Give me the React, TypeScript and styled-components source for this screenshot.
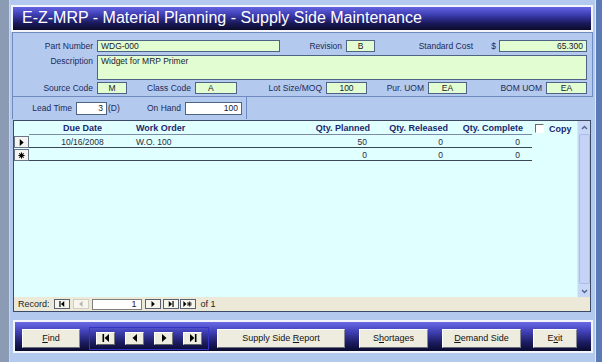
import React from 'react';
import styled, { createGlobalStyle } from 'styled-components';

const GlobalStyle = createGlobalStyle`
    html, body {
        margin: 0;
        padding: 0;
        background: #5b7bb6;
    }
    body {
        font-family: 'Liberation Sans', Arial, sans-serif;
    }
`;

const Screen = styled.div`
    width: 602px;
    height: 362px;
    display: flex;
    overflow: hidden;
`;

const LeftEdge = styled.div`
    width: 9px;
    background: #8a9bb3;
    border-right: 1px solid #c9d6ec;
`;

const Form = styled.div`
    width: 585px;
    box-sizing: border-box;
    background: #b4c9ee;
    display: flex;
    flex-direction: column;
    padding-top: 5px;
`;

const RightEdge = styled.div`
    flex: 1;
    background: #5b7bb6;
    border-left: 1px solid #dfe7f6;
`;

const TitleBar = styled.div`
    margin-left: 1px;
    width: 582px;
    height: 27px;
    box-sizing: border-box;
    border: 2px solid #f3f5fb;
    background: linear-gradient(180deg, #6464e4 0%, #3c3cb0 35%, #1a1a5c 70%, #0b0b2a 100%);
    color: #fff;
    font-size: 16px;
    line-height: 22px;
    padding-left: 9px;
    white-space: nowrap;
`;

const Section = styled.div`
    margin-left: 2px;
    width: 581px;
    box-sizing: border-box;
    border: 1px solid #6f8bc0;
    padding: 7px 0 2px 0;
    display: flex;
    flex-direction: column;
`;

const Row = styled.div<{ $mt?: number }>`
    display: flex;
    align-items: flex-start;
    margin-top: ${(p) => p.$mt || 0}px;
`;

const Label = styled.span<{ $w: number }>`
    width: ${(p) => p.$w}px;
    box-sizing: border-box;
    padding-right: 4px;
    text-align: right;
    font-size: 8.5px;
    line-height: 12px;
    color: #1e2a58;
    white-space: nowrap;
    flex-shrink: 0;
`;

const Field = styled.div<{ $w: number; $h?: number; $align?: string; $white?: boolean; $pl?: number }>`
    width: ${(p) => p.$w}px;
    height: ${(p) => p.$h || 12}px;
    box-sizing: border-box;
    border: 1px solid #4f6384;
    background: ${(p) => (p.$white ? '#ffffff' : '#e2fdd2')};
    font-size: 8.5px;
    line-height: 10px;
    padding: 0 3px 0 ${(p) => (p.$pl !== undefined ? p.$pl : 3)}px;
    text-align: ${(p) => p.$align || 'left'};
    color: #1a1a2a;
    white-space: nowrap;
    flex-shrink: 0;
`;

const Dollar = styled.span`
    width: 22px;
    box-sizing: border-box;
    padding-right: 3px;
    text-align: right;
    font-size: 8.5px;
    line-height: 12px;
    color: #1e2a58;
`;

const LeadBox = styled.div`
    margin-left: 2px;
    width: 235px;
    height: 22px;
    box-sizing: border-box;
    border-left: 1px solid #6f8bc0;
    border-right: 1px solid #6f8bc0;
    padding-top: 5px;
    display: flex;
    align-items: flex-start;
`;

const Unit = styled.span`
    width: 13px;
    padding-left: 1px;
    font-size: 8.5px;
    line-height: 13px;
    color: #1e2a58;
`;

const Subform = styled.div`
    margin: 1px 0 0 3px;
    width: 578px;
    height: 192px;
    box-sizing: border-box;
    border: 1px solid #3c4a66;
    display: flex;
    flex-direction: column;
`;

const Sheet = styled.div`
    flex: 1;
    display: flex;
    background: #e0ffff;
`;

const Grid = styled.div`
    flex: 1;
    display: flex;
    flex-direction: column;
`;

const HeaderRow = styled.div`
    display: flex;
    height: 13px;
    padding-top: 1px;
    align-items: center;
`;

const DataRow = styled.div`
    display: flex;
    height: 12px;
    margin-top: 1px;
    &:first-of-type {
        margin-top: 2px;
    }
`;

const Selector = styled.div`
    width: 15px;
    height: 100%;
    box-sizing: border-box;
    border: 1px solid #6a7588;
    background: #f4f4f0;
    display: flex;
    align-items: center;
    justify-content: center;
    flex-shrink: 0;
`;

const BlankSel = styled.div`
    width: 15px;
    flex-shrink: 0;
`;

const Cell = styled.div<{ $w: number; $align?: string; $pr?: number; $head?: boolean }>`
    width: ${(p) => p.$w}px;
    box-sizing: border-box;
    text-align: ${(p) => p.$align || 'left'};
    padding-right: ${(p) => p.$pr || 0}px;
    font-size: ${(p) => (p.$head ? 9 : 8.5)}px;
    font-weight: ${(p) => (p.$head ? 'bold' : 'normal')};
    color: ${(p) => (p.$head ? '#1a2870' : '#2a2a3a')};
    line-height: 12px;
    white-space: nowrap;
    border-bottom: 1px solid ${(p) => (p.$head ? '#7d8aa6' : '#3c4658')};
    flex-shrink: 0;
`;

const CopyBox = styled.label`
    display: flex;
    align-items: center;
    margin-left: 3px;
    font-size: 9px;
    font-weight: bold;
    color: #1a2870;
    gap: 5px;
`;

const Check = styled.span`
    width: 7px;
    height: 7px;
    border-top: 1px solid #6b6b6b;
    border-left: 1px solid #6b6b6b;
    border-right: 1px solid #fff;
    border-bottom: 1px solid #fff;
    background: #fff;
`;

const ScrollBar = styled.div`
    width: 12px;
    background: #c9d7f6;
    border-left: 1px solid #dce6fa;
    display: flex;
    flex-direction: column;
    align-items: center;
`;

const ScrollBtn = styled.div`
    height: 12px;
    width: 100%;
    display: flex;
    align-items: center;
    justify-content: center;
`;

const Thumb = styled.div`
    flex: 1;
    width: 9px;
    margin: 1px 0;
    background: #c5d4f6;
    border: 1px solid #aabde8;
    border-radius: 2px;
`;

const RecordBar = styled.div`
    height: 14px;
    background: #ece9d8;
    display: flex;
    align-items: center;
    padding-left: 4px;
    font-size: 9px;
    color: #222;
`;

const RecBtn = styled.div<{ $ml?: number; $off?: boolean }>`
    width: 16px;
    height: 10px;
    box-sizing: border-box;
    margin-left: ${(p) => p.$ml || 0}px;
    border: 1px solid ${(p) => (p.$off ? '#d2cfc0' : '#5a6272')};
    background: #f6f5ee;
    display: flex;
    align-items: center;
    justify-content: center;
`;

const RecInput = styled.div`
    width: 50px;
    height: 11px;
    box-sizing: border-box;
    margin-left: 3px;
    border: 1px solid #7f7f7f;
    background: #fff;
    text-align: right;
    padding-right: 4px;
    line-height: 9px;
`;

const RecCount = styled.span`
    margin-left: 5px;
`;

const Footer = styled.div`
    margin: 8px 0 0 3px;
    width: 580px;
    height: 33px;
    box-sizing: border-box;
    border: 2px solid #f3f5fb;
    background: linear-gradient(180deg, #6a6ae6 0%, #4444bc 30%, #1c1c64 70%, #0a0a2c 100%);
    display: flex;
    align-items: center;
    padding: 3px 0 0 7px;
`;

const Button = styled.div<{ $w: number; $ml?: number }>`
    width: ${(p) => p.$w}px;
    height: 19px;
    box-sizing: border-box;
    margin-left: ${(p) => p.$ml || 0}px;
    background: #eeecdf;
    border-top: 1px solid #ffffff;
    border-left: 1px solid #ffffff;
    border-right: 1px solid #8a8a94;
    border-bottom: 1px solid #6c6c78;
    font-size: 9px;
    line-height: 17px;
    text-align: center;
    color: #111;
    white-space: nowrap;
    u {
        text-decoration: underline;
        text-underline-offset: 1px;
    }
`;

const NavGroup = styled.div`
    margin-left: 9px;
    width: 120px;
    height: 23px;
    box-sizing: border-box;
    border: 1px solid #3434c4;
    display: flex;
    align-items: center;
    padding-left: 6px;
    gap: 10px;
`;

const NavBtn = styled.div`
    width: 19px;
    height: 13px;
    box-sizing: border-box;
    background: #eeecdf;
    border-top: 1px solid #fff;
    border-left: 1px solid #fff;
    border-right: 1px solid #777;
    border-bottom: 1px solid #666;
    display: flex;
    align-items: center;
    justify-content: center;
`;

type GlyphKind = 'first' | 'prev' | 'next' | 'last' | 'new';

const Glyph = ({ kind, color = '#000', size = 7 }: { kind: GlyphKind; color?: string; size?: number }) => {
    const w = kind === 'new' ? 12 : 8;
    return (
        <svg width={(w * size) / 8} height={size} viewBox={`0 0 ${w} 8`}>
            {kind === 'first' && (
                <>
                    <rect x="0.5" y="0" width="1.6" height="8" fill={color} />
                    <polygon points="7,0 7,8 2.6,4" fill={color} />
                </>
            )}
            {kind === 'prev' && <polygon points="6,0 6,8 1.5,4" fill={color} />}
            {kind === 'next' && <polygon points="2,0 2,8 6.5,4" fill={color} />}
            {kind === 'last' && (
                <>
                    <polygon points="1,0 1,8 5.4,4" fill={color} />
                    <rect x="5.9" y="0" width="1.6" height="8" fill={color} />
                </>
            )}
            {kind === 'new' && (
                <>
                    <polygon points="0.5,0 0.5,8 4.5,4" fill={color} />
                    <g stroke={color} strokeWidth="1.1">
                        <line x1="8.5" y1="0.5" x2="8.5" y2="7.5" />
                        <line x1="5.2" y1="4" x2="11.8" y2="4" />
                        <line x1="6.2" y1="1.5" x2="10.8" y2="6.5" />
                        <line x1="6.2" y1="6.5" x2="10.8" y2="1.5" />
                    </g>
                </>
            )}
        </svg>
    );
};

const Asterisk = () => (
    <svg width="7" height="7" viewBox="0 0 8 8">
        <g stroke="#000" strokeWidth="1.2">
            <line x1="4" y1="0.5" x2="4" y2="7.5" />
            <line x1="0.5" y1="4" x2="7.5" y2="4" />
            <line x1="1.5" y1="1.5" x2="6.5" y2="6.5" />
            <line x1="1.5" y1="6.5" x2="6.5" y2="1.5" />
        </g>
    </svg>
);

const Chevron = ({ up }: { up?: boolean }) => (
    <svg width="7" height="5" viewBox="0 0 7 5">
        <polyline
            points={up ? '1,4 3.5,1.5 6,4' : '1,1 3.5,3.5 6,1'}
            fill="none"
            stroke="#4d5f8c"
            strokeWidth="1.3"
        />
    </svg>
);

const rows = [
    { sel: 'cur', due: '10/16/2008', wo: 'W.O. 100', planned: '50', released: '0', complete: '0' },
    { sel: 'new', due: '', wo: '', planned: '0', released: '0', complete: '0' },
];

const App = () => {
    return (
        <>
            <GlobalStyle />
            <Screen>
                <LeftEdge />
                <Form>
                    <TitleBar>E-Z-MRP - Material Planning - Supply Side Maintenance</TitleBar>

                    <Section>
                        <Row>
                            <Label $w={84}>Part Number</Label>
                            <Field $w={183}>WDG-000</Field>
                            <Label $w={66}>Revision</Label>
                            <Field $w={29} $align="center">B</Field>
                            <Label $w={102}>Standard Cost</Label>
                            <Dollar>$</Dollar>
                            <Field $w={88} $align="right">65.300</Field>
                        </Row>
                        <Row $mt={3}>
                            <Label $w={84}>Description</Label>
                            <Field $w={490} $h={25}>Widget for MRP Primer</Field>
                        </Row>
                        <Row $mt={2}>
                            <Label $w={84}>Source Code</Label>
                            <Field $w={30} $align="center">M</Field>
                            <Label $w={68}>Class Code</Label>
                            <Field $w={42} $pl={12}>A</Field>
                            <Label $w={89}>Lot Size/MOQ</Label>
                            <Field $w={41} $align="center">100</Field>
                            <Label $w={61}>Pur. UOM</Label>
                            <Field $w={39} $align="center">EA</Field>
                            <Label $w={79}>BOM UOM</Label>
                            <Field $w={41} $align="center">EA</Field>
                        </Row>
                    </Section>

                    <LeadBox>
                        <Label $w={63}>Lead Time</Label>
                        <Field $w={31} $h={13} $white $align="right">3</Field>
                        <Unit>(D)</Unit>
                        <Label $w={64}>On Hand</Label>
                        <Field $w={57} $h={13} $white $align="right">100</Field>
                    </LeadBox>

                    <Subform>
                        <Sheet>
                            <Grid>
                                <HeaderRow>
                                    <BlankSel />
                                    <Cell $head $w={107} $align="center">Due Date</Cell>
                                    <Cell $head $w={154}>Work Order</Cell>
                                    <Cell $head $w={80} $align="right">Qty. Planned</Cell>
                                    <Cell $head $w={78} $align="right">Qty. Released</Cell>
                                    <Cell $head $w={84} $align="right" $pr={9}>Qty. Complete</Cell>
                                    <CopyBox>
                                        <Check />
                                        Copy
                                    </CopyBox>
                                </HeaderRow>
                                {rows.map((r, i) => (
                                    <DataRow key={i}>
                                        <Selector>
                                            {r.sel === 'cur' ? <Glyph kind="next" size={7} /> : <Asterisk />}
                                        </Selector>
                                        <Cell $w={107} $align="center">{r.due}</Cell>
                                        <Cell $w={154}>{r.wo}</Cell>
                                        <Cell $w={80} $align="right" $pr={3}>{r.planned}</Cell>
                                        <Cell $w={78} $align="right" $pr={5}>{r.released}</Cell>
                                        <Cell $w={84} $align="right" $pr={12}>{r.complete}</Cell>
                                    </DataRow>
                                ))}
                            </Grid>
                            <ScrollBar>
                                <ScrollBtn>
                                    <Chevron up />
                                </ScrollBtn>
                                <Thumb />
                                <ScrollBtn>
                                    <Chevron />
                                </ScrollBtn>
                            </ScrollBar>
                        </Sheet>
                        <RecordBar>
                            Record:
                            <RecBtn $ml={4}>
                                <Glyph kind="first" size={6} />
                            </RecBtn>
                            <RecBtn $ml={3} $off>
                                <Glyph kind="prev" size={6} color="#b8b6a8" />
                            </RecBtn>
                            <RecInput>1</RecInput>
                            <RecBtn $ml={3}>
                                <Glyph kind="next" size={6} />
                            </RecBtn>
                            <RecBtn $ml={2}>
                                <Glyph kind="last" size={6} />
                            </RecBtn>
                            <RecBtn $ml={1}>
                                <Glyph kind="new" size={6} />
                            </RecBtn>
                            <RecCount>of 1</RecCount>
                        </RecordBar>
                    </Subform>

                    <Footer>
                        <Button $w={58}>
                            <u>F</u>ind
                        </Button>
                        <NavGroup>
                            <NavBtn>
                                <Glyph kind="first" size={8} />
                            </NavBtn>
                            <NavBtn>
                                <Glyph kind="prev" size={8} />
                            </NavBtn>
                            <NavBtn>
                                <Glyph kind="next" size={8} />
                            </NavBtn>
                            <NavBtn>
                                <Glyph kind="last" size={8} />
                            </NavBtn>
                        </NavGroup>
                        <Button $w={128} $ml={8}>
                            Supply Side <u>R</u>eport
                        </Button>
                        <Button $w={69} $ml={14}>
                            S<u>h</u>ortages
                        </Button>
                        <Button $w={79} $ml={14}>
                            <u>D</u>emand Side
                        </Button>
                        <Button $w={44} $ml={12}>
                            E<u>x</u>it
                        </Button>
                    </Footer>
                </Form>
                <RightEdge />
            </Screen>
        </>
    );
};

export default App;
